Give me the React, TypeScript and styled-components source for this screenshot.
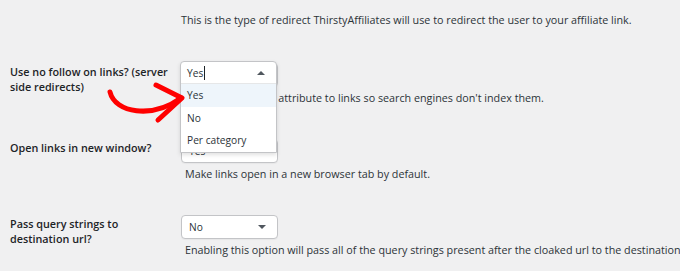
import styled, { createGlobalStyle } from 'styled-components';

const GlobalStyle = createGlobalStyle`
    html, body {
        margin: 0;
        padding: 0;
        background: #f0f0f1;
        overflow: hidden;
    }
    body {
        font-family: "Open Sans", "Noto Sans", sans-serif;
        color: #2c3338;
    }
`;

const Page = styled.div`
    position: relative;
    width: 680px;
    height: 271px;
    overflow: hidden;
`;

const Row = styled.div<{ $top: number; $bottom: number }>`
    display: flex;
    padding: ${p => p.$top}px 0 ${p => p.$bottom}px;
`;

const Label = styled.div`
    width: 171px;
    flex-shrink: 0;
    box-sizing: border-box;
    padding: 1px 0 0 10px;
    font-size: 10.8px;
    line-height: 15px;
    font-weight: 600;
    white-space: nowrap;
    color: #1d2327;
`;

const Field = styled.div`
    position: relative;
    display: flex;
    flex-direction: column;
    align-items: flex-start;
    padding-left: 10px;
`;

const Description = styled.p<{ $indent: number }>`
    margin: 2px 0 0;
    padding-left: ${p => p.$indent}px;
    font-size: 10.75px;
    line-height: 19px;
    white-space: nowrap;
    color: #2c3338;
`;

const Select = styled.div`
    box-sizing: border-box;
    width: 97px;
    height: 24px;
    display: flex;
    align-items: center;
    justify-content: space-between;
    padding: 0 11px 0 7px;
    background: #fff;
    border: 1px solid #c3c4c7;
    border-radius: 4px;
    box-shadow: 0 1px 1px rgba(0, 0, 0, 0.04);
    font-size: 10.2px;
    color: #2c3338;
`;

const Caret = styled.span<{ $up?: boolean }>`
    width: 0;
    height: 0;
    border-left: 4px solid transparent;
    border-right: 4px solid transparent;
    ${p => p.$up
        ? 'border-bottom: 4px solid #50575e;'
        : 'border-top: 4px solid #50575e;'}
`;

const OpenSelect = styled.div`
    position: relative;
    z-index: 2;
    box-sizing: border-box;
    width: 97px;
    background: #fff;
    border: 1px solid #c3c4c7;
    border-radius: 4px 4px 0 0;
    box-shadow: 0 2px 4px rgba(0, 0, 0, 0.12);
    font-size: 10.2px;
    color: #2c3338;
`;

const OpenHead = styled.div`
    height: 21px;
    display: flex;
    align-items: center;
    justify-content: space-between;
    padding: 0 11px 0 6px;
    border-bottom: 1px solid #e6e7e8;
`;

const Typed = styled.span`
    display: flex;
    align-items: center;

    &::after {
        content: '';
        width: 1px;
        height: 14px;
        margin-left: 1px;
        background: #1d2327;
    }
`;

const Options = styled.ul`
    list-style: none;
    margin: 0;
    padding: 0;
`;

const Option = styled.li<{ $active?: boolean }>`
    height: 22.5px;
    line-height: 22.5px;
    padding-left: 6px;
    background: ${p => (p.$active ? '#eef5fb' : '#fff')};
`;

const Annotation = styled.svg`
    position: absolute;
    left: 100px;
    top: 75px;
    z-index: 3;
    overflow: visible;
`;

function RedArrow() {
    return (
        <Annotation width="90" height="50" viewBox="0 0 90 50" fill="none">
            <path
                d="M10 17 C15 38 52 44 81 23"
                stroke="#ff0000"
                strokeWidth="5"
                strokeLinecap="round"
            />
            <path
                d="M56 10 L82 23 L58 45"
                stroke="#ff0000"
                strokeWidth="5"
                strokeLinecap="round"
                strokeLinejoin="round"
            />
        </Annotation>
    );
}

const Layer = styled.div`
    position: absolute;
    left: 180px;
    top: 61px;
    z-index: 2;
`;

function DropdownLayer() {
    return (
        <Layer>
            <OpenSelect>
                <OpenHead>
                    <Typed>Yes</Typed>
                    <Caret $up />
                </OpenHead>
                <Options>
                    <Option $active>Yes</Option>
                    <Option>No</Option>
                    <Option>Per category</Option>
                </Options>
            </OpenSelect>
        </Layer>
    );
}

export default function App() {
    return (
        <Page>
            <GlobalStyle />

            <Row $top={9} $bottom={17}>
                <Label />
                <Field>
                    <Description $indent={0}>
                        This is the type of redirect ThirstyAffiliates will use to redirect the user to your affiliate link.
                    </Description>
                </Field>
            </Row>

            <Row $top={16} $bottom={15}>
                <Label>
                    Use no follow on links? (server<br />
                    side redirects)
                </Label>
                <Field>
                    <Select>
                        Yes
                        <Caret />
                    </Select>
                    <Description $indent={4}>
                        Adds the nofollow attribute to links so search engines don't index them.
                    </Description>
                </Field>
            </Row>

            <Row $top={16} $bottom={15}>
                <Label>Open links in new window?</Label>
                <Field>
                    <Select>
                        Yes
                        <Caret />
                    </Select>
                    <Description $indent={4}>
                        Make links open in a new browser tab by default.
                    </Description>
                </Field>
            </Row>

            <Row $top={16} $bottom={15}>
                <Label>
                    Pass query strings to<br />
                    destination url?
                </Label>
                <Field>
                    <Select>
                        No
                        <Caret />
                    </Select>
                    <Description $indent={4}>
                        Enabling this option will pass all of the query strings present after the cloaked url to the destination url when redirecting.
                    </Description>
                </Field>
            </Row>

            <DropdownLayer />
            <RedArrow />
        </Page>
    );
}
